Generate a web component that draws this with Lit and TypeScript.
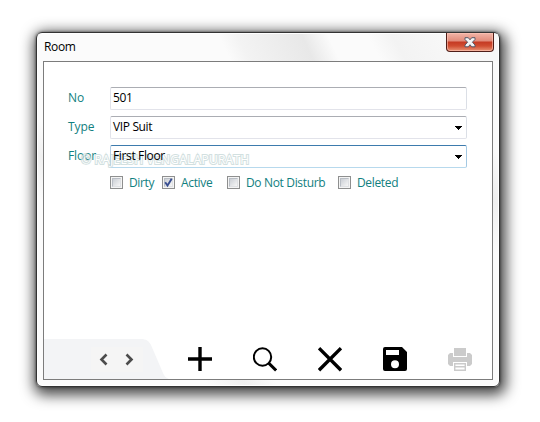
import { LitElement, html, css, svg } from "lit";
import { customElement, property } from "lit/decorators.js";
import { classMap } from "lit/directives/class-map.js";

@customElement("room-field")
class RoomField extends LitElement {
  @property() label = "";
  @property() value = "";
  @property({ type: Boolean }) select = false;
  @property({ type: Boolean }) focused = false;
  static styles = css`
    :host { display: flex; height: 23px; align-items: center; }
    .label { width: 42px; height: 23px; color: #118080; letter-spacing: -0.1px; line-height: 21px; }
    .box { box-sizing: border-box; width: 357px; height: 23px; display: flex; align-items: center; justify-content: space-between;
      border: 1px solid #e2e3ea; border-top-color: #abadb3; border-right-color: #dbdfe6; border-radius: 2px; padding: 0 4px 0 2px; color: #000; }
    .box.focused { border-color: #3d7bad #a4c9e3 #b7d9ed #b5cfe7; }
    .value { position: relative; z-index: 2; height: 21px; letter-spacing: -0.36px; line-height: 19px; }
    svg { display: block; margin-top: 1px; }
  `;
  render() {
    return html`<span class="label">${this.label}</span>
      <div class=${classMap({ box: true, focused: this.focused })}>
        <span class="value">${this.value}</span>
        ${this.select ? html`<svg width="7" height="4" shape-rendering="crispEdges"><path d="M0 0h7v1h-1v1h-1v1h-1v1h-1v-1h-1v-1h-1v-1h-1z" /></svg>` : ""}
      </div>`;
  }
}

@customElement("room-check")
class RoomCheck extends LitElement {
  @property() label = "";
  @property({ type: Boolean }) checked = false;
  static styles = css`
    :host { display: flex; align-items: center; height: 15px; gap: 6px; color: #118080; letter-spacing: -0.34px; white-space: nowrap; }
    .box { box-sizing: border-box; width: 13px; height: 13px; border: 1px solid #8e8f8f; background: #f4f4f4; padding: 1px; flex: none; }
    .well { box-sizing: border-box; width: 9px; height: 9px; border: 1px solid #b9bec5; border-right-color: #dfe1e4; border-bottom-color: #dfe1e4;
      background: linear-gradient(135deg, #cbcfd5, #f6f6f6); }
    svg { display: block; margin: -1px; overflow: visible; }
    span { line-height: 15px; }
  `;
  render() {
    return html`<div class="box"><div class="well">
      ${this.checked ? html`<svg width="9" height="9"><path d="M1.2 4.3 3.5 7.6 7.7 .8" fill="none" stroke="#394e91" stroke-width="1.9" /></svg>` : ""}
      </div></div><span>${this.label}</span>`;
  }
}

const icons = {
  add: svg`<path d="M12 0v24M0 12h24" stroke="#000" stroke-width="3.4" />`,
  search: svg`<circle cx="9.5" cy="10" r="8.7" fill="none" stroke="#000" stroke-width="2" /><path d="m15.7 16.2 7.4 7.2" stroke="#000" stroke-width="3" />`,
  remove: svg`<path d="M1 1.2 23 23.2M23 1.2 1 23.2" stroke="#000" stroke-width="3.4" />`,
  save: svg`<path fill-rule="evenodd" d="M2 0h17l5 5v17a2 2 0 0 1-2 2H2a2 2 0 0 1-2-2V2a2 2 0 0 1 2-2zM3 3v5h13V3zM12 13.2a4 4 0 1 0 0 8 4 4 0 0 0 0-8z" />`,
  print: svg`<g fill="#cbcbcb"><path d="M6 1h12v8H6z" /><path d="M2 6h3v4h14V6h3l2 2v9l-2 2h-3v-4H5v4H2l-2-2V8z" /><path fill-rule="evenodd" d="M6 16h12v8H6zM7.4 17.4v1.6h9.2v-1.6zM7.4 20.4v2h9.2v-2z" /></g>`,
};

@customElement("app-root")
class AppRoot extends LitElement {
  static styles = css`
    :host { display: block; box-sizing: border-box; width: 540px; height: 422px; padding: 32px 0 0 36px; background: #fff; overflow: hidden;
      font: 12px "Open Sans", "Noto Sans", sans-serif; }
    .window { box-sizing: border-box; width: 464px; height: 355px; padding: 0 6px 6px; border: 1px solid #333; border-radius: 6px;
      background: linear-gradient(48deg, #fbfbfb 0 22%, #f0f0f0 27%, #fbfbfb 31% 74%, #efefef 80%, #fafafa 86%);
      box-shadow: inset 0 0 0 1px #fff, 0 0 3px rgba(0,0,0,.6), 2px 4px 14px 4px rgba(0,0,0,.72); }
    .title { position: relative; height: 28px; margin: 0 -6px; padding: 0 6px 0 7px; display: flex; justify-content: space-between; align-items: flex-start;
      border-radius: 5px 5px 0 0; overflow: hidden; }
    .glass { position: absolute; inset: 1px 1px 0; z-index: 0; }
    .name { position: relative; line-height: 28px; letter-spacing: -0.35px; color: #000; }
    .close { position: relative; box-sizing: border-box; width: 48px; height: 19px; border: 1px solid #4f1d18; border-top: 0; border-radius: 0 0 4px 4px; margin-right: -1px;
      background: linear-gradient(#f2b5a8 0, #e18b7a 8px, #c53a23 9px, #d04d31 13px, #e99576 18px); box-shadow: inset 0 0 0 1px rgba(255,200,185,.6); }
    .close svg { display: block; margin: 4px auto 0; }
    .client { box-sizing: border-box; width: 450px; height: 319px; border: 1px solid #7c7c7c; background: #fff; display: flex; flex-direction: column; justify-content: space-between; }
    .form { position: relative; padding: 25px 0 0 24px; display: flex; flex-direction: column; gap: 6px; }
    .checks { display: grid; grid-template-columns: 52px 65px 111px auto; padding: 1px 0 0 42px; }
    .mark { position: absolute; left: 37px; top: 91px; z-index: 1; font: 12px/14px "Open Sans", sans-serif; letter-spacing: 0.25px; white-space: nowrap;
      color: #fff; -webkit-text-stroke: 2px #bdd2d2; paint-order: stroke fill; opacity: .68; }
    .bar { height: 41px; display: flex; }
    .nav { width: 144px; height: 41px; }
    .nav svg { display: block; }
    .tools { display: flex; gap: 41px; padding-top: 9px; }
    .tools svg { display: block; }
  `;
  render() {
    return html`<div class="window">
      <div class="title">
        <svg class="glass" width="460" height="27">
          <defs>
            <linearGradient id="g" gradientUnits="userSpaceOnUse" x1="187" y1="15" x2="278" y2="-26"><stop offset="0" stop-color="#fbfbfb" /><stop offset=".17" stop-color="#f3f3f3" /><stop offset=".76" stop-color="#e8e8e8" /><stop offset="1" stop-color="#fbfbfb" /></linearGradient>
            <linearGradient id="h" gradientUnits="userSpaceOnUse" x1="335" y1="12" x2="390" y2="-18"><stop offset="0" stop-color="#fbfbfb" /><stop offset=".35" stop-color="#f3f3f3" /><stop offset="1" stop-color="#f7f7f7" /></linearGradient>
          </defs>
          <path d="M0 0h460v27H0z" fill="#fbfbfb" /><path d="M150 0h170v27H150z" fill="url(#g)" /><path d="M320 0h140v27H320z" fill="url(#h)" />
        </svg>
        <span class="name">Room</span>
        <div class="close"><svg width="12" height="11"><path d="M1 .7h3.3L6 2.8 7.7 .7H11v1.8L8.4 5.2 11 8v1.8H7.7L6 7.7 4.3 9.8H1V8l2.6-2.8L1 2.5z" fill="#f4f4f4" stroke="#555968" /></svg></div>
      </div>
      <div class="client">
        <div class="form">
          <room-field label="No" value="501"></room-field>
          <room-field label="Type" value="VIP Suit" select></room-field>
          <room-field label="Floor" value="First Floor" select focused></room-field>
          <div class="checks">
            <room-check label="Dirty"></room-check>
            <room-check label="Active" checked></room-check>
            <room-check label="Do Not Disturb"></room-check>
            <room-check label="Deleted"></room-check>
          </div>
          <div class="mark">© RAJEESH VENGALAPURATH</div>
        </div>
        <div class="bar">
          <div class="nav"><svg width="144" height="41">
            <path d="M0 1h97c5 0 8 2 10 6l12 28c1 3 3 5 6 6H0z" fill="#f3f4f6" />
            <path d="M47 9h52v25H47z" fill="#f5f5f5" />
            <path d="m62.5 16.5-5 5 5 5M82.5 16.5l5 5-5 5" fill="none" stroke="#4c4c4c" stroke-width="2.6" />
          </svg></div>
          <div class="tools">
            ${[icons.add, icons.search, icons.remove, icons.save, icons.print].map((i) => html`<svg width="24" height="25">${i}</svg>`)}
          </div>
        </div>
      </div>
    </div>`;
  }
}
